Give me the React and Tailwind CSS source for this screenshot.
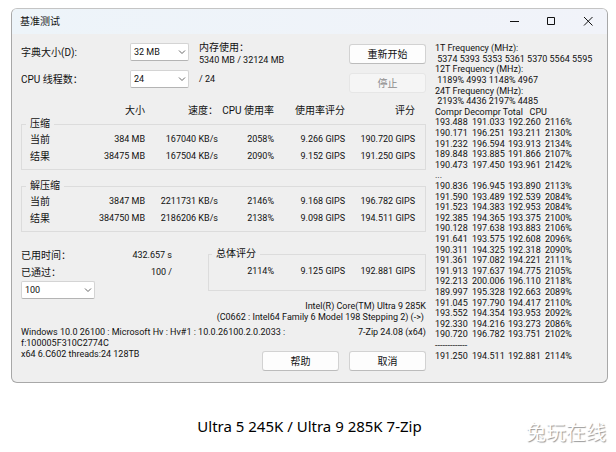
import React from 'react';
import { clsx } from 'clsx';

const packing = [
    ['当前', '384 MB', '167040 KB/s', '2058%', '9.266 GIPS', '190.720 GIPS'],
    ['结果', '38475 MB', '167504 KB/s', '2090%', '9.152 GIPS', '191.250 GIPS'],
];

const unpacking = [
    ['当前', '3847 MB', '2211731 KB/s', '2146%', '9.168 GIPS', '196.782 GIPS'],
    ['结果', '384750 MB', '2186206 KB/s', '2138%', '9.098 GIPS', '194.511 GIPS'],
];

const frequencyLines = [
    '1T Frequency (MHz):',
    ' 5374 5393 5353 5361 5370 5564 5595',
    '12T Frequency (MHz):',
    ' 1189% 4993 1148% 4967',
    '24T Frequency (MHz):',
    ' 2193% 4436 2197% 4485',
    'Compr Decompr Total   CPU',
];

const firstPasses = [
    ['193.488', '191.033', '192.260', '2116%'],
    ['190.171', '196.251', '193.211', '2130%'],
    ['191.232', '196.594', '193.913', '2134%'],
    ['189.848', '193.885', '191.866', '2107%'],
    ['190.473', '197.450', '193.961', '2142%'],
];

const lastPasses = [
    ['190.836', '196.945', '193.890', '2113%'],
    ['191.590', '193.489', '192.539', '2084%'],
    ['191.523', '194.383', '192.953', '2084%'],
    ['192.385', '194.365', '193.375', '2100%'],
    ['190.128', '197.638', '193.883', '2106%'],
    ['191.641', '193.575', '192.608', '2096%'],
    ['190.311', '194.325', '192.318', '2090%'],
    ['191.361', '197.082', '194.221', '2111%'],
    ['191.913', '197.637', '194.775', '2105%'],
    ['192.213', '200.006', '196.110', '2118%'],
    ['189.997', '195.328', '192.663', '2089%'],
    ['191.045', '197.790', '194.417', '2110%'],
    ['193.552', '194.354', '193.953', '2092%'],
    ['192.330', '194.216', '193.273', '2086%'],
    ['190.720', '196.782', '193.751', '2102%'],
];

const total = [['191.250', '194.511', '192.881', '2114%']];

const TitleBar = () => (
    <header className="flex h-[25px] items-center justify-between bg-gradient-to-r from-[#edf4f9] to-[#f1f3f9] pl-2 pr-3">
        <h1 className="text-[10px]">基准测试</h1>
        <div className="flex items-center gap-6">
            <button type="button" aria-label="最小化" className="p-px">
                <svg className="size-[11px]" viewBox="0 0 11 11" stroke="currentColor" fill="none">
                    <path d="M1 5.5h9" />
                </svg>
            </button>
            <button type="button" aria-label="最大化" className="p-px">
                <svg className="size-[11px]" viewBox="0 0 11 11" stroke="currentColor" fill="none">
                    <path d="M1.5 1.5h7v7h-7z" />
                </svg>
            </button>
            <button type="button" aria-label="关闭" className="p-px">
                <svg className="size-[11px]" viewBox="0 0 11 11" stroke="currentColor" fill="none">
                    <path d="M1 1l8.5 8.5M9.5 1L1 9.5" />
                </svg>
            </button>
        </div>
    </header>
);

const Dropdown = ({ id, value, className, label }) => (
    <div className={clsx('relative', className)}>
        <select
            id={id}
            aria-label={label}
            defaultValue={value}
            className="block h-[18px] w-full appearance-none rounded-xs border border-[#d4d4d4] border-b-[#b4b4b4] bg-white pl-[3px] leading-3"
        >
            <option>{value}</option>
        </select>
        <svg className="pointer-events-none absolute right-[3px] top-[6px] h-[6px] w-[8px]" viewBox="0 0 8 6" fill="none" stroke="#666">
            <path d="M1 1.5l3 3 3-3" />
        </svg>
    </div>
);

const DialogButton = ({ children, disabled }) => (
    <button
        type="button"
        disabled={disabled}
        className={clsx(
            'h-5 w-[77px] rounded-[3px] border text-[10px]',
            disabled ? 'border-[#e6e6e6] bg-[#f5f5f5] text-[#8c8c8c]' : 'border-[#d2d2d2] border-b-[#bcbcbc] bg-[#fdfdfd]'
        )}
    >
        {children}
    </button>
);

const ResultColumns = () => (
    <colgroup>
        <col />
        <col className="w-[60px]" />
        <col className="w-[73px]" />
        <col className="w-[56px]" />
        <col className="w-[71px]" />
        <col className="w-[70px]" />
    </colgroup>
);

const ResultGroup = ({ title, rows }) => (
    <fieldset className="border border-[#dcdcdc] pb-1 pl-2 pr-[10px]">
        <legend className="-ml-1 h-[14px] px-1 text-[10px] leading-[14px]">{title}</legend>
        <table className="w-full table-fixed">
            <ResultColumns />
            <tbody>
                {rows.map(([name, ...values]) => (
                    <tr key={name} className="h-[17px]">
                        <th className="text-left text-[10px] font-normal">{name}</th>
                        {values.map((value) => (
                            <td key={value} className="whitespace-nowrap text-right">{value}</td>
                        ))}
                    </tr>
                ))}
            </tbody>
        </table>
    </fieldset>
);

const PassRows = ({ rows }) =>
    rows.map((row) => (
        <tr key={row[0]}>
            {row.map((value) => (
                <td key={value}>{value}</td>
            ))}
        </tr>
    ));

const PassLog = () => (
    <table className="mb-[10px] mt-px w-[160px] table-fixed leading-[10px]">
        <colgroup>
            <col className="w-[37px]" />
            <col className="w-[36px]" />
            <col className="w-[37px]" />
            <col />
        </colgroup>
        <tbody>
            {frequencyLines.map((line) => (
                <tr key={line}>
                    <td colSpan={4} className="whitespace-pre">{line}</td>
                </tr>
            ))}
            <PassRows rows={firstPasses} />
            <tr>
                <td colSpan={4}>...</td>
            </tr>
            <PassRows rows={lastPasses} />
            <tr>
                <td colSpan={4}>-------------</td>
            </tr>
            <PassRows rows={total} />
        </tbody>
    </table>
);

const Settings = () => (
    <div className="flex">
        <div className="grid w-[168px] grid-cols-[1fr_59px] content-start items-center gap-y-[9px] pt-px">
            <label htmlFor="dictionary" className="text-[10px]">字典大小(D):</label>
            <Dropdown id="dictionary" value="32 MB" />
            <label htmlFor="threads" className="text-[10px]">CPU 线程数：</label>
            <Dropdown id="threads" value="24" />
        </div>
        <div className="flex-1 pl-[10px] leading-3">
            <p className="text-[10px] leading-3">内存使用：</p>
            <p>5340 MB / 32124 MB</p>
            <p className="mt-[7px]">/ 24</p>
        </div>
        <div className="flex flex-col gap-[9px] pt-[2px]">
            <DialogButton>重新开始</DialogButton>
            <DialogButton disabled>停止</DialogButton>
        </div>
    </div>
);

const Summary = () => (
    <div className="mt-[15px] flex items-start justify-between">
        <div className="w-[151px]">
            <dl className="grid grid-cols-2 leading-[17px]">
                <dt className="text-[10px] leading-[17px]">已用时间：</dt>
                <dd className="text-right">432.657 s</dd>
                <dt className="text-[10px] leading-[17px]">已通过：</dt>
                <dd className="text-right">100 /</dd>
            </dl>
            <Dropdown id="passes" label="已通过" value="100" className="w-[74px]" />
        </div>
        <fieldset className="w-[218px] border border-[#dcdcdc] pb-[10px] pr-[10px] pt-[2px]">
            <legend className="ml-[3px] h-[14px] px-1 text-[10px] leading-[14px]">总体评分</legend>
            <div className="flex justify-end text-right leading-[17px]">
                <span>2114%</span>
                <span className="w-[71px]">9.125 GIPS</span>
                <span className="w-[70px]">192.881 GIPS</span>
            </div>
        </fieldset>
    </div>
);

function App() {
    return (
        <div className="relative bg-white pb-4 pl-[11px] pr-2 pt-2 text-black">
            <main className="overflow-hidden rounded-md border border-[#a8a8a8] border-t-[#c4c4c4] bg-[#efefef] font-[Roboto,'Noto_Sans_CJK_SC',sans-serif] text-[9px] text-[#111]">
                <TitleBar />
                <div className="flex gap-[9px] pb-[11px] pl-[9px] pr-3 pt-2">
                    <div className="min-w-0 flex-1">
                        <Settings />

                        <div className="mt-3 pl-[9px] pr-[11px]">
                            <table className="w-full table-fixed leading-3">
                                <ResultColumns />
                                <thead>
                                    <tr className="whitespace-nowrap text-right text-[10px] leading-3">
                                        <td />
                                        <th className="font-normal">大小</th>
                                        <th className="font-normal">速度：</th>
                                        <th className="font-normal">CPU 使用率</th>
                                        <th className="font-normal">使用率评分</th>
                                        <th className="font-normal">评分</th>
                                    </tr>
                                </thead>
                            </table>
                        </div>
                        <ResultGroup title="压缩" rows={packing} />
                        <div className="mt-[9px]">
                            <ResultGroup title="解压缩" rows={unpacking} />
                        </div>
                        <Summary />

                        <div className="mt-[2px] text-right leading-[11px]">
                            <p>Intel(R) Core(TM) Ultra 9 285K</p>
                            <p className="pr-[2px]">(C0662 : Intel64 Family 6 Model 198 Stepping 2) (-&gt;)</p>
                        </div>
                        <div className="mt-1 flex justify-between whitespace-nowrap leading-[11px]">
                            <p>Windows 10.0 26100 : Microsoft Hv : Hv#1 : 10.0.26100.2.0.2033 :</p>
                            <p>7-Zip 24.08 (x64)</p>
                        </div>
                        <div className="flex justify-between leading-[11px]">
                            <div>
                                <p>f:100005F310C2774C</p>
                                <p>x64 6.C602 threads:24 128TB</p>
                            </div>
                            <div className="flex gap-[10px] pt-[13px]">
                                <DialogButton>帮助</DialogButton>
                                <DialogButton>取消</DialogButton>
                            </div>
                        </div>
                    </div>
                    <PassLog />
                </div>
            </main>

            <p className="mt-8 text-center font-['Noto_Sans','Noto_Sans_CJK_SC',sans-serif] text-[15px]">
                Ultra 5 245K / Ultra 9 285K 7-Zip
            </p>
            <span className="absolute bottom-2 right-[10px] font-['Noto_Sans_CJK_SC',sans-serif] text-xl text-white [text-shadow:1px_1px_1px_#999]">
                兔玩在线
            </span>
        </div>
    );
}

export default App;
